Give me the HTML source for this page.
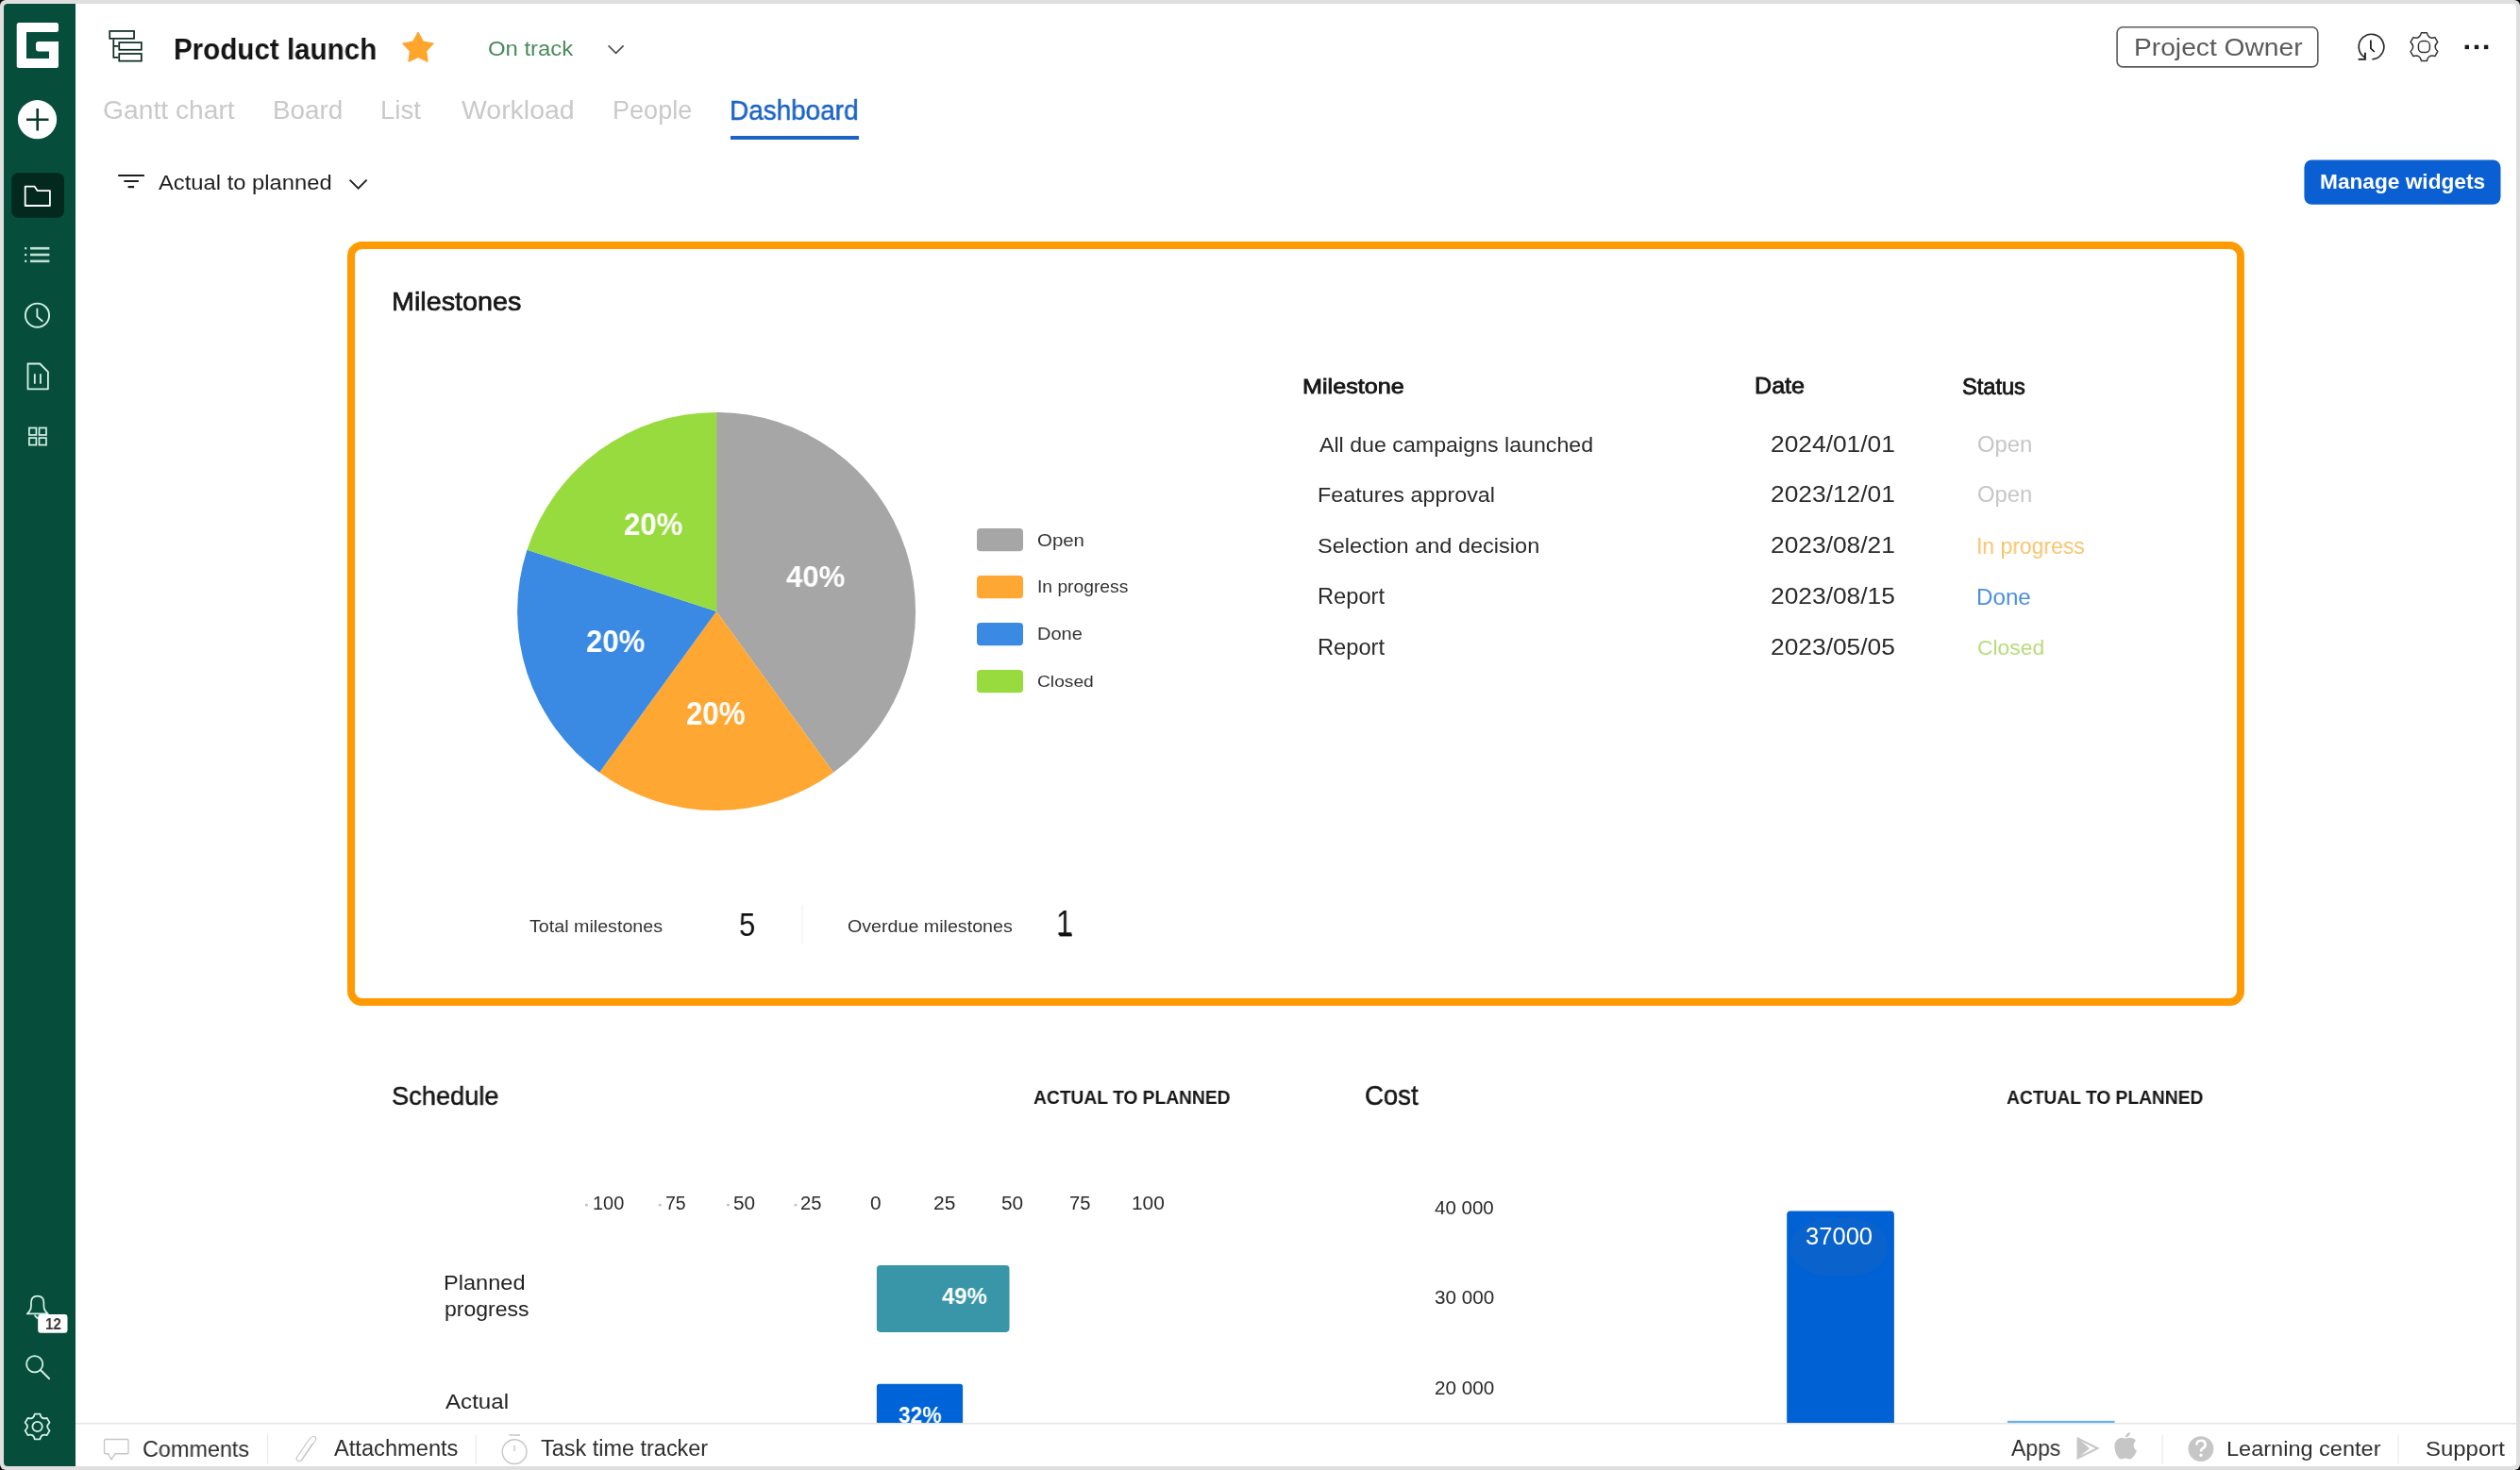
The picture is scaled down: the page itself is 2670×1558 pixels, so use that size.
<!DOCTYPE html>
<html><head><meta charset="utf-8"><title>Product launch - Dashboard</title>
<style>
html,body{margin:0;padding:0;}
body{width:2670px;height:1558px;overflow:hidden;background:#000;position:relative;font-family:"Liberation Sans",sans-serif;}
#frame{position:absolute;left:0;top:0;width:2670px;height:1558px;background:#dfdfdf;border-radius:6px;}
#content{position:absolute;left:4px;top:4px;width:2662px;height:1550px;background:#fff;border-radius:4px;overflow:hidden;}
svg{position:absolute;left:0;top:0;}
.t{position:absolute;white-space:pre;transform-origin:0 0;will-change:transform;font-family:"Liberation Sans",sans-serif;}
</style></head>
<body>
<div id="frame"></div>
<div id="content"><svg width="2670" height="1558" viewBox="0 0 2670 1558" style="left:-4px;top:-4px">
<rect x='4' y='4' width='76' height='1550' fill='#064e3b'/>
<path d='M20.2,24 H59.5 Q62,24 62,26.5 V31.5 Q62,34 59.5,34 H28 V62 H52 V54.5 H41 Q38,54.5 38,51.5 V47 Q38,44 41,44 H62 V69.5 Q62,72 59.5,72 H20.2 Q17.7,72 17.7,69.5 V26.5 Q17.7,24 20.2,24 Z' fill='#fff'/>
<circle cx='39.5' cy='126.7' r='20.6' fill='#fff'/>
<path d='M28,126.7 H51.5 M39.7,115 V138.6' stroke='#0b3a2d' stroke-width='2.6'/>
<rect x='12.2' y='183.2' width='55.8' height='47.6' rx='7' fill='#03291e'/>
<path d='M26.7,218 V197.6 H36.5 L39.6,202.1 H52.9 V218 Z' fill='none' stroke='#fff' stroke-width='1.8' stroke-linejoin='round'/>
<rect x='26.2' y='262.1' width='2' height='2.2' fill='#d6f2e6'/>
<rect x='32' y='261.9' width='20.4' height='2.6' fill='#d6f2e6' opacity='0.9'/>
<rect x='26.2' y='268.9' width='2' height='2.2' fill='#d6f2e6'/>
<rect x='32' y='268.7' width='20.4' height='2.6' fill='#d6f2e6' opacity='0.9'/>
<rect x='26.2' y='275.7' width='2' height='2.2' fill='#d6f2e6'/>
<rect x='32' y='275.5' width='20.4' height='2.6' fill='#d6f2e6' opacity='0.9'/>
<circle cx='39.5' cy='334.2' r='12.6' fill='none' stroke='#d6f2e6' stroke-width='1.9'/>
<path d='M39.4,327.5 V335.6 L44.8,340.2' fill='none' stroke='#d6f2e6' stroke-width='1.8' stroke-linecap='round'/>
<path d='M29.5,412.3 V385.5 H42.3 L50.9,394.2 V412.3 Z' fill='none' stroke='#d6f2e6' stroke-width='1.8' stroke-linejoin='round'/>
<path d='M36.8,396.3 V406.8 M42.9,396.3 V406.8' stroke='#d6f2e6' stroke-width='1.8'/>
<rect x='30.9' y='453.5' width='7.5' height='7.5' fill='none' stroke='#d6f2e6' stroke-width='1.7'/>
<rect x='30.9' y='464.1' width='7.5' height='7.5' fill='none' stroke='#d6f2e6' stroke-width='1.7'/>
<rect x='41.5' y='453.5' width='7.5' height='7.5' fill='none' stroke='#d6f2e6' stroke-width='1.7'/>
<rect x='41.5' y='464.1' width='7.5' height='7.5' fill='none' stroke='#d6f2e6' stroke-width='1.7'/>
<path d='M28.8,1392.4 Q33,1389 33,1384 V1380.5 Q33,1373.6 39.6,1373.6 Q46.4,1373.6 46.4,1380.5 V1384 Q46.4,1389 50.8,1392.4 Z' fill='none' stroke='#d6f2e6' stroke-width='1.7' stroke-linejoin='round'/>
<path d='M36.6,1393.8 L40,1397.6' stroke='#d6f2e6' stroke-width='1.8'/>
<rect x='40.2' y='1393.1' width='31.3' height='19.7' rx='3' fill='#fff'/>
<circle cx='36.7' cy='1445.8' r='8.6' fill='none' stroke='#d6f2e6' stroke-width='1.8'/>
<path d='M42.9,1452 L52.2,1461.2' stroke='#d6f2e6' stroke-width='1.9' stroke-linecap='round'/>
<path d='M36.77,1498.70 L42.43,1498.70 Q43.70,1504.90 49.71,1502.90 L52.53,1507.80 Q47.80,1512.00 52.53,1516.20 L49.71,1521.10 Q43.70,1519.10 42.43,1525.30 L36.77,1525.30 Q35.50,1519.10 29.49,1521.10 L26.67,1516.20 Q31.40,1512.00 26.67,1507.80 L29.49,1502.90 Q35.50,1504.90 36.77,1498.70 Z' fill='none' stroke='#d6f2e6' stroke-width='1.8' stroke-linejoin='round'/>
<circle cx='39.6' cy='1512' r='5.2' fill='none' stroke='#d6f2e6' stroke-width='1.8'/>
<rect x='116.25' y='32.95' width='25.8' height='7.9' fill='none' stroke='#0b2a20' stroke-width='1.7'/>
<rect x='126.25' y='45.05' width='23.6' height='7.7' fill='none' stroke='#0b2a20' stroke-width='1.7'/>
<rect x='126.25' y='56.95' width='23.6' height='7.7' fill='none' stroke='#0b2a20' stroke-width='1.7'/>
<path d='M120.3,41.7 V60.9 H125.4 M120.3,48.8 H125.4' fill='none' stroke='#0b2a20' stroke-width='1.7'/>
<path d='M443.00,34.40 L448.29,44.12 L459.17,46.15 L451.56,54.18 L452.99,65.15 L443.00,60.40 L433.01,65.15 L434.44,54.18 L426.83,46.15 L437.71,44.12 Z' fill='#ffa52b' stroke='#ffa52b' stroke-width='1.2' stroke-linejoin='round'/>
<path d='M644.6,48.4 L652.6,56.4 L660.6,48.4' fill='none' stroke='#4a4a4a' stroke-width='1.6'/>
<rect x='774' y='144' width='136' height='4' fill='#1b63c6'/>
<rect x='125.2' y='185' width='27.7' height='2' fill='#1e1e1e'/><rect x='131.4' y='191' width='15.5' height='2' fill='#1e1e1e'/><rect x='135.6' y='197' width='6.5' height='2.2' fill='#1e1e1e'/>
<path d='M370.6,190.6 L379.6,199.6 L388.6,190.6' fill='none' stroke='#222' stroke-width='1.9'/>
<rect x='2243.1' y='28.7' width='212.7' height='42.2' rx='6' fill='none' stroke='#5c5c5c' stroke-width='1.6'/>
<path d='M2505.45,60.88 A13.3,13.3 0 1 1 2513.43,62.87' fill='none' stroke='#2a2a2a' stroke-width='1.7'/>
<path d='M2505.9,55.8 V62.9 H2498.6' fill='none' stroke='#1a1a1a' stroke-width='1.9'/>
<path d='M2511.9,42.5 V51.4 L2515.8,55' fill='none' stroke='#1a1a1a' stroke-width='1.7'/>
<path d='M2565.50,34.68 L2571.30,34.68 Q2572.90,41.81 2579.87,39.63 L2582.77,44.65 Q2577.40,49.60 2582.77,54.55 L2579.87,59.57 Q2572.90,57.39 2571.30,64.52 L2565.50,64.52 Q2563.90,57.39 2556.93,59.57 L2554.03,54.55 Q2559.40,49.60 2554.03,44.65 L2556.93,39.63 Q2563.90,41.81 2565.50,34.68 Z' fill='none' stroke='#333' stroke-width='1.5' stroke-linejoin='round'/>
<rect x='2562.4' y='43.6' width='12' height='12' rx='4.5' fill='none' stroke='#333' stroke-width='1.5'/>
<rect x='2611.6' y='47.7' width='4.4' height='4.4' fill='#1a1a1a'/>
<rect x='2621.8' y='47.7' width='4.4' height='4.4' fill='#1a1a1a'/>
<rect x='2631.9' y='47.7' width='4.4' height='4.4' fill='#1a1a1a'/>
<rect x='2441.4' y='169.5' width='208.1' height='47.3' rx='8' fill='#0a60d2'/>
<rect x='372' y='260' width='2002' height='802' rx='11.5' fill='none' stroke='#ff9a00' stroke-width='8'/>
<path d='M759.1,648.0 L759.10,437.00 A211.0,211.0 0 0 1 883.12,818.70 Z' fill='#a6a6a6'/>
<path d='M759.1,648.0 L883.12,818.70 A211.0,211.0 0 0 1 635.08,818.70 Z' fill='#ffa733'/>
<path d='M759.1,648.0 L635.08,818.70 A211.0,211.0 0 0 1 558.43,582.80 Z' fill='#3a8ae4'/>
<path d='M759.1,648.0 L558.43,582.80 A211.0,211.0 0 0 1 759.10,437.00 Z' fill='#98db3e'/>
<rect x='1035' y='560' width='49' height='24.3' rx='4' fill='#a6a6a6'/>
<rect x='1035' y='610' width='49' height='24.3' rx='4' fill='#ffa733'/>
<rect x='1035' y='660' width='49' height='24.3' rx='4' fill='#3a8ae4'/>
<rect x='1035' y='710' width='49' height='24.3' rx='4' fill='#98db3e'/>
<rect x='849.5' y='959' width='1' height='41' fill='#eeeeee'/>
<rect x='1122.6' y='990' width='13.1' height='2.4' fill='#111'/>
<rect x='619.9' y='1276' width='3' height='2.4' fill='#c4c4c4'/>
<rect x='697.7' y='1276' width='3' height='2.4' fill='#c4c4c4'/>
<rect x='769.9' y='1276' width='3' height='2.4' fill='#c4c4c4'/>
<rect x='841.4' y='1276' width='3' height='2.4' fill='#c4c4c4'/>
<rect x='928.9' y='1341.1' width='140.6' height='70.8' rx='3.8' fill='#3896a8'/>
<path d='M928.9,1508.5 V1469.7 Q928.9,1466.7 931.9,1466.7 H1017.1 Q1020.1,1466.7 1020.1,1469.7 V1508.5 Z' fill='#0064d9'/>
<path d='M1893.2,1508.5 V1287.4 Q1893.2,1283.6 1897,1283.6 H2003.1 Q2006.9,1283.6 2006.9,1287.4 V1508.5 Z' fill='#0061d5'/>
<rect x='1897' y='1291' width='103.4' height='61.3' rx='40' ry='30' fill='#0a62cc'/>
<rect x='2126.8' y='1505.8' width='113.8' height='2.4' fill='#69b3ea'/>
<rect x='80' y='1508' width='2586' height='1.5' fill='#e4e4e4'/>
<rect x='283.0' y='1520.8' width='1.2' height='30.6' fill='#e9e9e9'/>
<rect x='503.8' y='1520.8' width='1.2' height='30.6' fill='#e9e9e9'/>
<rect x='2290.5' y='1520.8' width='1.2' height='30.6' fill='#e9e9e9'/>
<rect x='2540.4' y='1520.8' width='1.2' height='30.6' fill='#e9e9e9'/>
<path d='M112,1525.5 H134.5 Q136,1525.5 136,1527 V1539.3 Q136,1540.8 134.5,1540.8 H122 L118,1546.8 L114.5,1540.8 H112 Q110.5,1540.8 110.5,1539.3 V1527 Q110.5,1525.5 112,1525.5 Z' fill='none' stroke='#c6c6c6' stroke-width='1.4'/>
<path d='M319,1548.5 L334,1527 Q336,1523 332.5,1522.5 Q330,1522.3 328,1525 L314.8,1544 Q313,1547 316,1548.5 Q318,1549.5 320,1546.5 L331,1530' fill='none' stroke='#c6c6c6' stroke-width='1.2'/>
<circle cx='545.1' cy='1538.6' r='12.9' fill='none' stroke='#c6c6c6' stroke-width='1.4'/>
<path d='M539.5,1521 H551 M545.1,1532 V1538' stroke='#c6c6c6' stroke-width='1.4'/>
<path d='M2201.5,1524.5 L2222.5,1535 L2201.5,1545.5 Z' fill='none' stroke='#c6c6c6' stroke-width='2'/>
<path d='M2202,1525 L2214,1535 L2202,1545' fill='#c6c6c6'/>
<path d='M2251.5,1524.8 C2247,1522.5 2240.5,1525 2240.5,1533 C2240.5,1540 2244.5,1546.5 2247.5,1546.5 C2249.5,1546.5 2250,1545.5 2252,1545.5 C2254,1545.5 2254.5,1546.5 2256.5,1546.5 C2259.5,1546.5 2262.5,1541 2264,1537.5 C2260,1535.5 2259.5,1529.5 2263,1527 C2260.5,1523 2255.5,1523 2251.5,1524.8 Z M2252,1523.5 C2252,1520.5 2254,1518.5 2257,1518 C2257,1521 2255,1523.2 2252,1523.5 Z' fill='#c6c6c6'/>
<circle cx='2331.9' cy='1535.6' r='13.4' fill='#c6c6c6'/>
<path d='M2327.4,1531.5 Q2327.4,1526.8 2332,1526.8 Q2336.6,1526.8 2336.6,1531.2 Q2336.6,1533.8 2333.6,1535.2 Q2332,1536 2332,1538.5' fill='none' stroke='#fff' stroke-width='2.6'/>
<circle cx='2332' cy='1542.3' r='1.7' fill='#fff'/>
</svg></div>
<div class=t style="left:184.13px;top:37.40px;font-size:31.30px;line-height:31.30px;font-weight:700;color:#141414;transform:scaleX(0.9447)">Product launch</div>
<div class=t style="left:516.71px;top:40.63px;font-size:21.96px;line-height:21.96px;font-weight:400;color:#4a8a5c;transform:scaleX(1.0877)">On track</div>
<div class=t style="left:109.29px;top:104.20px;font-size:26.83px;line-height:26.83px;font-weight:400;color:#c9c9c9;transform:scaleX(1.0527)">Gantt chart</div>
<div class=t style="left:289.47px;top:104.20px;font-size:26.83px;line-height:26.83px;font-weight:400;color:#c9c9c9;transform:scaleX(1.0384)">Board</div>
<div class=t style="left:402.60px;top:104.20px;font-size:26.83px;line-height:26.83px;font-weight:400;color:#c9c9c9;transform:scaleX(1.0244)">List</div>
<div class=t style="left:489.30px;top:104.20px;font-size:26.83px;line-height:26.83px;font-weight:400;color:#c9c9c9;transform:scaleX(1.0597)">Workload</div>
<div class=t style="left:648.64px;top:104.20px;font-size:26.83px;line-height:26.83px;font-weight:400;color:#c9c9c9;transform:scaleX(1.0086)">People</div>
<div class=t style="left:773.17px;top:103.01px;font-size:28.93px;line-height:28.93px;font-weight:400;color:#1b63c6;transform:scaleX(0.9649);-webkit-text-stroke:0.5px #1b63c6">Dashboard</div>
<div class=t style="left:167.70px;top:182.50px;font-size:21.17px;line-height:21.17px;font-weight:400;color:#1e1e1e;transform:scaleX(1.1234)">Actual to planned</div>
<div class=t style="left:2260.64px;top:38.14px;font-size:25.25px;line-height:25.25px;font-weight:400;color:#5a5a5a;transform:scaleX(1.1164)">Project Owner</div>
<div class=t style="left:2458.41px;top:182.00px;font-size:22.36px;line-height:22.36px;font-weight:700;color:#ffffff;transform:scaleX(1.0139)">Manage widgets</div>
<div class=t style="left:415.00px;top:306.29px;font-size:28.01px;line-height:28.01px;font-weight:400;color:#161616;transform:scaleX(1.0258);-webkit-text-stroke:0.7px #161616">Milestones</div>
<div class=t style="left:1379.99px;top:399.31px;font-size:22.22px;line-height:22.22px;font-weight:400;color:#161616;transform:scaleX(1.1324);-webkit-text-stroke:0.8px #161616">Milestone</div>
<div class=t style="left:1859.29px;top:398.21px;font-size:23.51px;line-height:23.51px;font-weight:400;color:#161616;transform:scaleX(1.0686);-webkit-text-stroke:0.8px #161616">Date</div>
<div class=t style="left:2078.92px;top:398.50px;font-size:23.18px;line-height:23.18px;font-weight:400;color:#161616;transform:scaleX(1.0182);-webkit-text-stroke:0.8px #161616">Status</div>
<div class=t style="left:1397.50px;top:460.79px;font-size:22.49px;line-height:22.49px;font-weight:400;color:#2a2a2a;transform:scaleX(1.0316)">All due campaigns launched</div>
<div class=t style="left:1876.18px;top:459.99px;font-size:23.42px;line-height:23.42px;font-weight:400;color:#2a2a2a;transform:scaleX(1.1259)">2024/01/01</div>
<div class=t style="left:2095.11px;top:459.97px;font-size:23.45px;line-height:23.45px;font-weight:400;color:#c6c6c6;transform:scaleX(1.0175)">Open</div>
<div class=t style="left:1395.63px;top:513.99px;font-size:22.49px;line-height:22.49px;font-weight:400;color:#2a2a2a;transform:scaleX(1.0372)">Features approval</div>
<div class=t style="left:1876.18px;top:513.19px;font-size:23.42px;line-height:23.42px;font-weight:400;color:#2a2a2a;transform:scaleX(1.1259)">2023/12/01</div>
<div class=t style="left:2095.11px;top:513.17px;font-size:23.45px;line-height:23.45px;font-weight:400;color:#c6c6c6;transform:scaleX(1.0175)">Open</div>
<div class=t style="left:1396.32px;top:568.29px;font-size:22.49px;line-height:22.49px;font-weight:400;color:#2a2a2a;transform:scaleX(1.0454)">Selection and decision</div>
<div class=t style="left:1876.18px;top:567.49px;font-size:23.42px;line-height:23.42px;font-weight:400;color:#2a2a2a;transform:scaleX(1.1259)">2023/08/21</div>
<div class=t style="left:2094.23px;top:567.18px;font-size:23.79px;line-height:23.79px;font-weight:400;color:#f6c46c;transform:scaleX(0.9647)">In progress</div>
<div class=t style="left:1395.61px;top:621.37px;font-size:23.45px;line-height:23.45px;font-weight:400;color:#2a2a2a;transform:scaleX(1.0096)">Report</div>
<div class=t style="left:1876.18px;top:621.39px;font-size:23.42px;line-height:23.42px;font-weight:400;color:#2a2a2a;transform:scaleX(1.1259)">2023/08/15</div>
<div class=t style="left:2094.37px;top:621.08px;font-size:23.79px;line-height:23.79px;font-weight:400;color:#4b8fdf;transform:scaleX(1.0165)">Done</div>
<div class=t style="left:1395.61px;top:675.07px;font-size:23.45px;line-height:23.45px;font-weight:400;color:#2a2a2a;transform:scaleX(1.0096)">Report</div>
<div class=t style="left:1876.18px;top:675.09px;font-size:23.42px;line-height:23.42px;font-weight:400;color:#2a2a2a;transform:scaleX(1.1259)">2023/05/05</div>
<div class=t style="left:2095.16px;top:675.89px;font-size:22.49px;line-height:22.49px;font-weight:400;color:#b9dc7a;transform:scaleX(1.0183)">Closed</div>
<div class=t style="left:1099.28px;top:563.51px;font-size:18.10px;line-height:18.10px;font-weight:400;color:#333333;transform:scaleX(1.1285)">Open</div>
<div class=t style="left:1098.57px;top:613.09px;font-size:18.37px;line-height:18.37px;font-weight:400;color:#333333;transform:scaleX(1.0488)">In progress</div>
<div class=t style="left:1098.70px;top:663.29px;font-size:18.37px;line-height:18.37px;font-weight:400;color:#333333;transform:scaleX(1.0890)">Done</div>
<div class=t style="left:1099.34px;top:714.14px;font-size:17.36px;line-height:17.36px;font-weight:400;color:#333333;transform:scaleX(1.1061)">Closed</div>
<div class=t style="left:832.99px;top:595.40px;font-size:32.00px;line-height:32.00px;font-weight:700;color:#ffffff;transform:scaleX(0.9740)">40%</div>
<div class=t style="left:661.37px;top:539.31px;font-size:33.29px;line-height:33.29px;font-weight:700;color:#ffffff;transform:scaleX(0.9352)">20%</div>
<div class=t style="left:620.77px;top:662.28px;font-size:34.14px;line-height:34.14px;font-weight:700;color:#ffffff;transform:scaleX(0.9117)">20%</div>
<div class=t style="left:726.87px;top:738.86px;font-size:34.29px;line-height:34.29px;font-weight:700;color:#ffffff;transform:scaleX(0.9079)">20%</div>
<div class=t style="left:560.91px;top:972.09px;font-size:19.07px;line-height:19.07px;font-weight:400;color:#333333;transform:scaleX(1.0319)">Total milestones</div>
<div class=t style="left:782.66px;top:961.64px;font-size:35.36px;line-height:35.36px;font-weight:400;color:#111111;transform:scaleX(0.8778)">5</div>
<div class=t style="left:897.82px;top:972.09px;font-size:19.07px;line-height:19.07px;font-weight:400;color:#333333;transform:scaleX(1.0310)">Overdue milestones</div>
<div class=t style="left:1119.45px;top:961.43px;font-size:36.67px;line-height:36.67px;font-weight:400;color:#111111;transform:scaleX(0.8689)">1</div>
<div class=t style="left:414.74px;top:1147.44px;font-size:28.54px;line-height:28.54px;font-weight:400;color:#161616;transform:scaleX(0.9542);-webkit-text-stroke:0.5px #161616">Schedule</div>
<div class=t style="left:1095.32px;top:1152.90px;font-size:20.00px;line-height:20.00px;font-weight:700;color:#161616;transform:scaleX(0.9610)">ACTUAL TO PLANNED</div>
<div class=t style="left:627.81px;top:1266.49px;font-size:19.43px;line-height:19.43px;font-weight:400;color:#2a2a2a;transform:scaleX(1.0261)">100</div>
<div class=t style="left:705.32px;top:1266.49px;font-size:19.43px;line-height:19.43px;font-weight:400;color:#2a2a2a;transform:scaleX(1.0042)">75</div>
<div class=t style="left:776.97px;top:1266.49px;font-size:19.43px;line-height:19.43px;font-weight:400;color:#2a2a2a;transform:scaleX(1.0694)">50</div>
<div class=t style="left:848.19px;top:1266.49px;font-size:19.43px;line-height:19.43px;font-weight:400;color:#2a2a2a;transform:scaleX(1.0395)">25</div>
<div class=t style="left:922.17px;top:1266.49px;font-size:19.43px;line-height:19.43px;font-weight:400;color:#2a2a2a;transform:scaleX(1.0723)">0</div>
<div class=t style="left:988.65px;top:1266.49px;font-size:19.43px;line-height:19.43px;font-weight:400;color:#2a2a2a;transform:scaleX(1.0799)">25</div>
<div class=t style="left:1061.07px;top:1266.49px;font-size:19.43px;line-height:19.43px;font-weight:400;color:#2a2a2a;transform:scaleX(1.0694)">50</div>
<div class=t style="left:1132.79px;top:1266.49px;font-size:19.43px;line-height:19.43px;font-weight:400;color:#2a2a2a;transform:scaleX(1.0395)">75</div>
<div class=t style="left:1198.83px;top:1266.49px;font-size:19.43px;line-height:19.43px;font-weight:400;color:#2a2a2a;transform:scaleX(1.0759)">100</div>
<div class=t style="left:470.11px;top:1349.39px;font-size:22.49px;line-height:22.49px;font-weight:400;color:#222222;transform:scaleX(1.0481)">Planned</div>
<div class=t style="left:470.62px;top:1377.39px;font-size:22.49px;line-height:22.49px;font-weight:400;color:#222222;transform:scaleX(1.0231)">progress</div>
<div class=t style="left:472.00px;top:1475.20px;font-size:22.36px;line-height:22.36px;font-weight:400;color:#222222;transform:scaleX(1.0795)">Actual</div>
<div class=t style="left:997.66px;top:1362.14px;font-size:24.43px;line-height:24.43px;font-weight:700;color:#ffffff;transform:scaleX(0.9787)">49%</div>
<div class=t style="left:951.54px;top:1487.94px;font-size:24.43px;line-height:24.43px;font-weight:700;color:#ffffff;transform:scaleX(0.9315)">32%</div>
<div class=t style="left:1445.52px;top:1146.97px;font-size:29.21px;line-height:29.21px;font-weight:400;color:#161616;transform:scaleX(0.9431);-webkit-text-stroke:0.5px #161616">Cost</div>
<div class=t style="left:2126.22px;top:1152.90px;font-size:20.00px;line-height:20.00px;font-weight:700;color:#161616;transform:scaleX(0.9601)">ACTUAL TO PLANNED</div>
<div class=t style="left:1520.29px;top:1270.64px;font-size:19.71px;line-height:19.71px;font-weight:400;color:#2a2a2a;transform:scaleX(1.0415)">40 000</div>
<div class=t style="left:1519.87px;top:1366.14px;font-size:19.71px;line-height:19.71px;font-weight:400;color:#2a2a2a;transform:scaleX(1.0485)">30 000</div>
<div class=t style="left:1519.66px;top:1462.04px;font-size:19.71px;line-height:19.71px;font-weight:400;color:#2a2a2a;transform:scaleX(1.0521)">20 000</div>
<div class=t style="left:1913.18px;top:1298.46px;font-size:25.57px;line-height:25.57px;font-weight:400;color:#ffffff;transform:scaleX(0.9994)">37000</div>
<div class=t style="left:151.03px;top:1523.50px;font-size:24.00px;line-height:24.00px;font-weight:400;color:#2e2e2e;transform:scaleX(0.9746)">Comments</div>
<div class=t style="left:353.60px;top:1524.34px;font-size:23.01px;line-height:23.01px;font-weight:400;color:#2e2e2e;transform:scaleX(1.0281)">Attachments</div>
<div class=t style="left:572.53px;top:1524.34px;font-size:23.01px;line-height:23.01px;font-weight:400;color:#2e2e2e;transform:scaleX(1.0193)">Task time tracker</div>
<div class=t style="left:2131.20px;top:1523.65px;font-size:23.23px;line-height:23.23px;font-weight:400;color:#2e2e2e;transform:scaleX(0.9876)">Apps</div>
<div class=t style="left:2359.42px;top:1524.73px;font-size:21.96px;line-height:21.96px;font-weight:400;color:#2e2e2e;transform:scaleX(1.0715)">Learning center</div>
<div class=t style="left:2570.40px;top:1523.93px;font-size:22.90px;line-height:22.90px;font-weight:400;color:#2e2e2e;transform:scaleX(1.0454)">Support</div>
<div class=t style="left:47.59px;top:1394.76px;font-size:16.29px;line-height:16.29px;font-weight:700;color:#3a3a3a;transform:scaleX(0.9302)">12</div>
</body></html>
